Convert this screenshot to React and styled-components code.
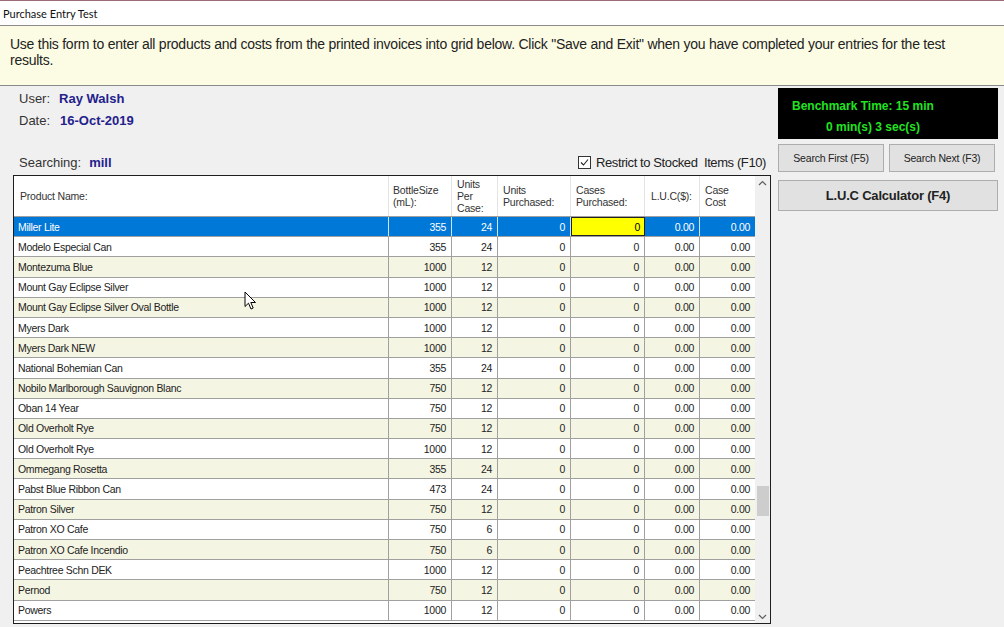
import React from 'react';
import styled, { createGlobalStyle } from 'styled-components';

const GlobalStyle = createGlobalStyle`
	html, body {
		margin: 0;
		padding: 0;
		background: #f0f0f0;
	}
	body {
		font-family: "Liberation Sans", Arial, sans-serif;
		width: 1004px;
		height: 627px;
		overflow: hidden;
	}
`;

const Window = styled.div`
	width: 1004px;
	height: 627px;
	display: flex;
	flex-direction: column;
	background: #f0f0f0;
	border-top: 1px solid #9b6b78;
	box-sizing: border-box;
	position: relative;
	overflow: hidden;
`;

const TitleBar = styled.div`
	flex-shrink: 0;
	height: 25px;
	background: #ffffff;
	border-bottom: 1px solid #8a8a8a;
	box-sizing: border-box;
	display: flex;
	align-items: center;
	padding-left: 3px;
	font-family: Lato, "Open Sans", sans-serif;
	font-size: 11px;
	color: #111;
`;

const Notice = styled.div`
	flex-shrink: 0;
	height: 60px;
	background: #fcfce4;
	border-bottom: 1px solid #8a8a8a;
	padding: 10px 40px 0 10px;
	box-sizing: border-box;
	font-size: 14px;
	line-height: 16px;
	color: #222;
	letter-spacing: -0.25px;
`;

const Body = styled.div`
	flex: 1;
	display: flex;
	padding: 2px 0 0 13px;
	gap: 7px;
`;

const LeftCol = styled.div`
	width: 758px;
	display: flex;
	flex-direction: column;
`;

const InfoBlock = styled.div`
	padding: 3px 0 0 6px;
	height: 58px;
	box-sizing: border-box;
	display: flex;
	flex-direction: column;
	gap: 6px;
`;

const InfoRow = styled.div`
	display: flex;
	align-items: baseline;
	gap: ${(p) => p.$gap || 8}px;
	font-size: 13px;
	color: #333;
	height: 16px;
`;

const Value = styled.span`
	font-weight: bold;
	color: #24208c;
	font-size: 13px;
`;

const SearchBar = styled.div`
	height: 25px;
	display: flex;
	align-items: center;
	justify-content: space-between;
	padding: 0 5px 0 6px;
	margin-top: 4px;
	font-size: 13px;
	color: #333;
`;

const CheckLabel = styled.label`
	display: flex;
	align-items: center;
	gap: 5px;
	font-size: 13px;
	color: #222;
	letter-spacing: -0.4px;
`;

const CheckBox = styled.span`
	width: 11px;
	height: 11px;
	border: 1px solid #333;
	background: #fff;
	display: flex;
	align-items: center;
	justify-content: center;
`;

const Grid = styled.div`
	height: 449px;
	border: 1px solid #1e1e1e;
	background: #fff;
	display: flex;
	box-sizing: border-box;
	overflow: hidden;
`;

const Table = styled.div`
	width: 741px;
	display: flex;
	flex-direction: column;
`;

const cols = '375px 63px 46px 73px 74px 55px 55px';

const HeadRow = styled.div`
	display: grid;
	grid-template-columns: ${cols};
	height: 41px;
	flex-shrink: 0;
	border-bottom: 1px solid #a0a0a0;
	box-sizing: border-box;
	background: #fff;
`;

const HeadCell = styled.div`
	display: flex;
	align-items: center;
	padding-left: ${(p) => p.$pad || 5}px;
	border-right: 1px solid #e4e4e4;
	font-size: 10.5px;
	line-height: 12px;
	color: #333;
	letter-spacing: -0.2px;
	&:last-child {
		border-right: none;
	}
`;

const Row = styled.div`
	display: grid;
	grid-template-columns: ${cols};
	height: 20.2px;
	flex-shrink: 0;
	box-sizing: border-box;
	border-bottom: 1px solid #a0a0a0;
	background: ${(p) => (p.$selected ? '#0078d7' : p.$even ? '#f5f5e3' : '#ffffff')};
	color: ${(p) => (p.$selected ? '#ffffff' : '#222')};
`;

const Cell = styled.div`
	display: flex;
	align-items: center;
	justify-content: ${(p) => (p.$left ? 'flex-start' : 'flex-end')};
	padding: 0 5px 0 4px;
	border-right: 1px solid ${(p) => (p.$selected ? '#cfe4f7' : '#a0a0a0')};
	font-size: 10.5px;
	letter-spacing: -0.3px;
	white-space: nowrap;
	overflow: hidden;
	box-sizing: border-box;
	&:last-child {
		border-right: none;
	}
`;

const FocusCell = styled(Cell)`
	background: #ffff00;
	color: #000;
	border: 1px solid #222;
	padding-right: 4px;
`;

const ScrollBar = styled.div`
	width: 16px;
	background: #f0f0f0;
	display: flex;
	flex-direction: column;
	align-items: center;
	justify-content: space-between;
	padding: 4px 0 3px;
	box-sizing: border-box;
`;

const Thumb = styled.div`
	width: 12px;
	height: 30px;
	background: #cdcdcd;
	margin-top: 300px;
`;

const Spacer = styled.div`
	flex: 1;
`;

const RightCol = styled.div`
	width: 220px;
	display: flex;
	flex-direction: column;
`;

const Timer = styled.div`
	height: 51px;
	background: #000;
	color: #22e322;
	font-weight: bold;
	font-size: 12px;
	display: flex;
	flex-direction: column;
	justify-content: center;
	gap: 7px;
	padding: 5px 0 0 14px;
	box-sizing: border-box;
`;

const TimerLine = styled.div`
	padding-left: ${(p) => p.$indent || 0}px;
`;

const ButtonRow = styled.div`
	display: flex;
	gap: 5px;
	margin-top: 5px;
`;

const Button = styled.button`
	width: ${(p) => p.$w || 106}px;
	height: ${(p) => p.$h || 28}px;
	background: #e1e1e1;
	border: 1px solid #adadad;
	font-family: "Liberation Sans", Arial, sans-serif;
	font-size: ${(p) => p.$size || 10.5}px;
	font-weight: ${(p) => (p.$bold ? 'bold' : 'normal')};
	color: #222;
	letter-spacing: -0.2px;
	padding: 0;
	margin-top: ${(p) => p.$mt || 0}px;
`;

const Cursor = styled.svg`
	position: absolute;
	left: 244px;
	top: 290px;
`;

const rows = [
	['Miller Lite', 355, 24],
	['Modelo Especial Can', 355, 24],
	['Montezuma Blue', 1000, 12],
	['Mount Gay Eclipse Silver', 1000, 12],
	['Mount Gay Eclipse Silver Oval Bottle', 1000, 12],
	['Myers Dark', 1000, 12],
	['Myers Dark NEW', 1000, 12],
	['National Bohemian Can', 355, 24],
	['Nobilo Marlborough Sauvignon Blanc', 750, 12],
	['Oban 14 Year', 750, 12],
	['Old Overholt Rye', 750, 12],
	['Old Overholt Rye', 1000, 12],
	['Ommegang Rosetta', 355, 24],
	['Pabst Blue Ribbon Can', 473, 24],
	['Patron Silver', 750, 12],
	['Patron XO Cafe', 750, 6],
	['Patron XO Cafe Incendio', 750, 6],
	['Peachtree Schn DEK', 1000, 12],
	['Pernod', 750, 12],
	['Powers', 1000, 12],
];

export default function App() {
	return (
		<>
			<GlobalStyle />
			<Window>
				<TitleBar>Purchase Entry Test</TitleBar>
				<Notice>
					Use this form to enter all products and costs from the printed invoices into grid below. Click "Save and Exit" when you have completed your entries for the test results.
				</Notice>
				<Body>
					<LeftCol>
						<InfoBlock>
							<InfoRow $gap={9}>
								User: <Value>Ray Walsh</Value>
							</InfoRow>
							<InfoRow $gap={10}>
								Date: <Value>16-Oct-2019</Value>
							</InfoRow>
						</InfoBlock>
						<SearchBar>
							<InfoRow $gap={8}>
								Searching: <Value>mill</Value>
							</InfoRow>
							<CheckLabel>
								<CheckBox>
									<svg width="9" height="9" viewBox="0 0 9 9">
										<path d="M1 4.5 L3.5 7 L8 1.5" fill="none" stroke="#222" strokeWidth="1.1" />
									</svg>
								</CheckBox>
								Restrict to Stocked&nbsp; Items (F10)
							</CheckLabel>
						</SearchBar>
						<Grid>
							<Table>
								<HeadRow>
									<HeadCell $pad={6}>Product Name:</HeadCell>
									<HeadCell $pad={4}>BottleSize<br />(mL):</HeadCell>
									<HeadCell>Units<br />Per<br />Case:</HeadCell>
									<HeadCell>Units<br />Purchased:</HeadCell>
									<HeadCell>Cases<br />Purchased:</HeadCell>
									<HeadCell $pad={6}>L.U.C($):</HeadCell>
									<HeadCell>Case<br />Cost</HeadCell>
								</HeadRow>
								{rows.map(([name, size, units], i) => {
									const sel = i === 0;
									return (
										<Row key={i} $selected={sel} $even={i % 2 === 0}>
											<Cell $left $selected={sel}>{name}</Cell>
											<Cell $selected={sel}>{size}</Cell>
											<Cell $selected={sel}>{units}</Cell>
											<Cell $selected={sel}>0</Cell>
											{sel ? <FocusCell>0</FocusCell> : <Cell>0</Cell>}
											<Cell $selected={sel}>0.00</Cell>
											<Cell $selected={sel}>0.00</Cell>
										</Row>
									);
								})}
							</Table>
							<ScrollBar>
								<svg width="9" height="6" viewBox="0 0 9 6">
									<path d="M1 5 L4.5 1.5 L8 5" fill="none" stroke="#606060" strokeWidth="1.2" />
								</svg>
								<Thumb />
								<Spacer />
								<svg width="9" height="6" viewBox="0 0 9 6">
									<path d="M1 1 L4.5 4.5 L8 1" fill="none" stroke="#606060" strokeWidth="1.2" />
								</svg>
							</ScrollBar>
						</Grid>
					</LeftCol>
					<RightCol>
						<Timer>
							<TimerLine>Benchmark Time: 15 min</TimerLine>
							<TimerLine $indent={34}>0 min(s) 3 sec(s)</TimerLine>
						</Timer>
						<ButtonRow>
							<Button>Search First (F5)</Button>
							<Button>Search Next (F3)</Button>
						</ButtonRow>
						<Button $w={220} $h={31} $size={13} $bold $mt={8}>L.U.C Calculator (F4)</Button>
					</RightCol>
				</Body>
				<Cursor width="13" height="20" viewBox="0 0 13 20">
					<path d="M1 1 L1 15.5 L4.5 12.2 L7 18 L9.2 17 L6.8 11.5 L11.5 11.5 Z" fill="#fff" stroke="#000" strokeWidth="1" strokeLinejoin="round" />
				</Cursor>
			</Window>
		</>
	);
}
